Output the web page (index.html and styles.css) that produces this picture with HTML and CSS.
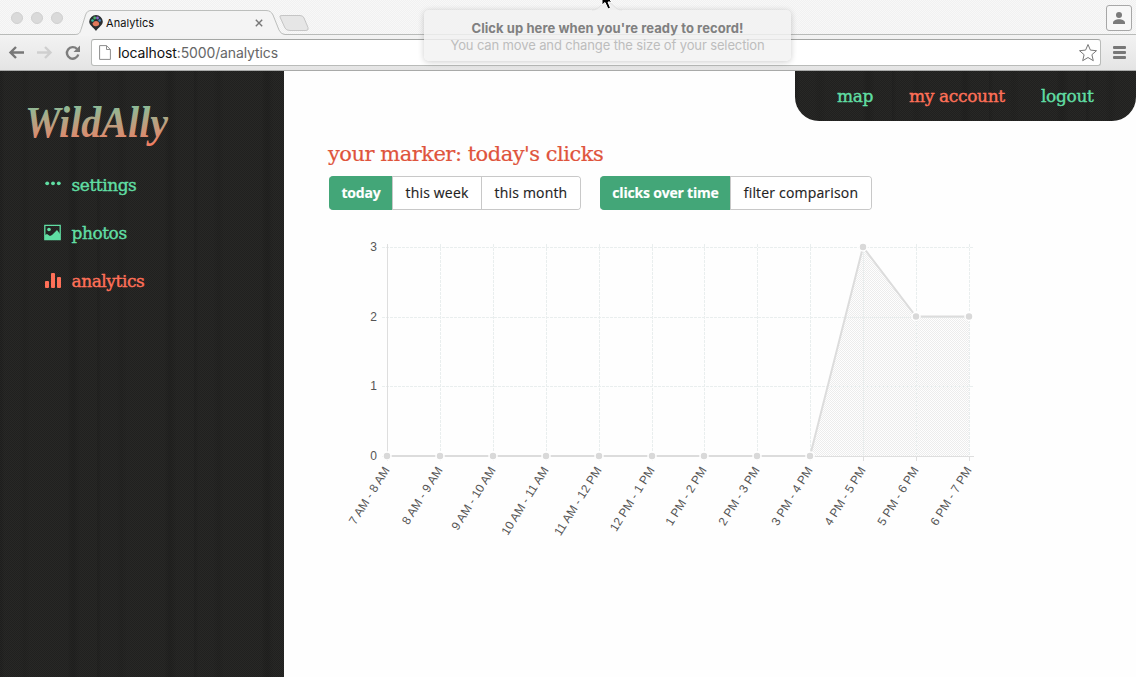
FILE: index.html
```html
<!DOCTYPE html>
<html lang="en">
<head>
<meta charset="utf-8">
<title>Analytics</title>
<link rel="stylesheet" href="styles.css">
</head>
<body>
<div class="window">
  <header class="browser">
    <div class="tabstrip">
      <div class="lights"><i></i><i></i><i></i></div>
      <div class="tab">
        <svg class="tab-shape" width="236" height="26" viewBox="0 0 236 26"><path d="M0 24.500C5 24.500 5 22 6.500 18L10.500 5Q12 .5 16 .5H191Q196 .5 198 5L204 20Q206 24.500 210 24.500V26H0Z" fill="#f4f4f4"/><path d="M0 24.500C5 24.500 5 22 6.500 18L10.500 5Q12 .5 16 .5H191Q196 .5 198 5L204 20Q206 24.500 210 24.500" fill="none" stroke="#bcbebc"/><path d="M205 7Q204 5.500 207 5.500H225Q228 5.500 229 8L233 17.500Q234 20.500 231 20.500H215Q211 20.500 210 18Z" fill="#e6e6e6" stroke="#c5c5c5"/></svg>
        <div class="tab-content">
          <svg width="14" height="16" viewBox="0 0 14 16"><path d="M7 0a6.800 6.800 0 0 1 6.800 6.500C13.800 10 10 12 7 16 4 12 .2 10 .2 6.500A6.800 6.800 0 0 1 7 0Z" fill="#2a2e30"/><circle cx="3.500" cy="5.500" r="1.300" fill="#37c3a2"/><circle cx="5.700" cy="3" r="1.400" fill="#49b56a"/><circle cx="8.500" cy="3" r="1.400" fill="#8c6bd0"/><circle cx="10.700" cy="5.500" r="1.300" fill="#4689c9"/><path d="M3.500 8.500Q6 4.500 9.500 7Q11.500 10 8 11Q4 12 3.500 8.500Z" fill="#e2795b"/></svg>
          <span>Analytics</span>
          <svg class="close" width="8" height="8" viewBox="0 0 8 8"><path d="M.8.800l6.400 6.400M7.200.800L.8 7.200" stroke="#777" stroke-width="1.400"/></svg>
        </div>
      </div>
      <div class="profile"><svg width="14" height="14" viewBox="0 0 14 14" fill="#7b7b7b"><circle cx="7" cy="4" r="3"/><path d="M1 13v-1c0-5 12-5 12 0v1Z"/></svg></div>
    </div>
    <div class="toolbar">
      <svg class="nav" width="82" height="18" viewBox="0 0 82 18" fill="none" stroke-width="2.400"><path d="M18 8.500H4.500M10 3L4.500 8.500l5.500 5.500" stroke="#777"/><path d="M31 8.500h13.500M39 3L44.500 8.500l-5.500 5.500" stroke="#cfcfcf"/><path d="M71 5A5.800 5.800 0 1 0 72.300 10.500" stroke="#7d7d7d"/><path d="M74 1.500v6.500h-6.500Z" fill="#7d7d7d"/></svg>
      <div class="address">
        <svg width="12" height="15" viewBox="0 0 12 15"><path d="M.6.600H7.500L11.400 4.500V14.400H.6ZM7.500.600V4.500H11.400" fill="#fff" stroke="#8d8d8d"/></svg>
        <span class="url">localhost<em>:5000/analytics</em></span>
        <svg class="star" width="20" height="20" viewBox="0 0 20 20"><path d="M10 1.500l2.400 5.600 6.100.6-4.600 4 1.400 6L10 14.500l-5.300 3.200 1.400-6-4.600-4 6.100-.6Z" fill="#fff" stroke="#777" stroke-linejoin="round"/></svg>
      </div>
      <div class="menu"><i></i><i></i><i></i></div>
    </div>
  </header>
  <div class="tip">
    <svg class="tip-arrow" width="30" height="12" viewBox="0 0 30 12"><path d="M0 11C8 11 9 3 15 3S22 11 30 11" fill="#efefef" stroke="#e0e0e0"/></svg>
    <b>Click up here when you're ready to record!</b>
    <span>You can move and change the size of your selection</span>
  </div>
  <svg class="cursor" width="12" height="10" viewBox="0 0 12 10"><path d="M1-6V5L4 2.500 7 9 9.500 8 7 2H11L3-6Z" fill="#000" stroke="#fff"/></svg>
  <div class="app">
    <aside class="sidebar wood">
      <svg class="logo" width="150" height="60" viewBox="0 0 150 60" role="img"><defs><linearGradient id="ink" gradientUnits="userSpaceOnUse" x1="0" y1="6" x2="0" y2="56"><stop stop-color="#7dc5a0"/><stop offset="1" stop-color="#ff765c"/></linearGradient></defs><text x="3" y="43" textLength="143" lengthAdjust="spacingAndGlyphs">WildAlly</text></svg>
      <nav class="side-nav">
        <a><svg width="18" height="18" viewBox="0 0 18 18" fill="#60dea3"><circle cx="3.200" cy="7.300" r="1.900"/><circle cx="9" cy="7.300" r="1.900"/><circle cx="14.800" cy="7.300" r="1.900"/></svg>settings</a>
        <a><svg width="18" height="18" viewBox="0 0 18 18"><path d="M.8 1.300H16.200V15.500H.8Z" fill="none" stroke="#60dea3" stroke-width="1.300"/><circle cx="5" cy="5.500" r="1.800" fill="#60dea3"/><path d="M1 15V11l2-1 3 2 2-1 5-5 3 4v5Z" fill="#60dea3"/></svg>photos</a>
        <a class="active"><svg width="18" height="18" viewBox="0 0 18 18" fill="#ff7058"><rect x="1" y="9" width="4" height="7" rx="1"/><rect x="7" y="1" width="4" height="15" rx="1"/><rect x="13" y="5" width="4" height="11" rx="1"/></svg>analytics</a>
      </nav>
    </aside>
    <main class="content">
      <nav class="top-nav wood"><a class="map">map</a><a class="account">my account</a><a class="logout">logout</a></nav>
      <h1>your marker: today's clicks</h1>
      <div class="controls">
        <div class="group"><button class="on today">today</button><button class="week">this week</button><button class="month">this month</button></div>
        <div class="group"><button class="on over">clicks over time</button><button class="filter">filter comparison</button></div>
      </div>
      <svg class="chart" width="660" height="320" viewBox="340 230 660 320">
        <defs><pattern id="dither" width="2" height="2" patternUnits="userSpaceOnUse"><path d="M0 0h1v1H0ZM1 1h1v1H1Z" fill="#ececec"/></pattern></defs>
        <path class="area" d="M387 456H810L863 247 916 317H969V456Z" fill="url(#dither)"/>
        <path class="grid" d="M382 247.500H974M382 317.500H974M382 386.500H974M440.500 244V461M493.500 244V461M546.500 244V461M599.500 244V461M652.500 244V461M704.500 244V461M757.500 244V461M810.500 244V461M863.500 244V461M916.500 244V461M969.500 244V461"/>
        <path class="axis" d="M387.500 244V461M382 456.500H974M863.500 456V461M916.500 456V461M969.500 456V461"/>
        <path class="series" d="M387 456H810L863 247 916 316.500H969"/>
        <g class="dots"><circle cx="387" cy="456" r="4"/><circle cx="440" cy="456" r="4"/><circle cx="493" cy="456" r="4"/><circle cx="546" cy="456" r="4"/><circle cx="599" cy="456" r="4"/><circle cx="652" cy="456" r="4"/><circle cx="704" cy="456" r="4"/><circle cx="757" cy="456" r="4"/><circle cx="810" cy="456" r="4"/><circle cx="863" cy="247" r="4"/><circle cx="916" cy="316.500" r="4"/><circle cx="969" cy="316.500" r="4"/></g>
        <g class="labels"><text x="377" y="251">3</text><text x="377" y="321">2</text><text x="377" y="390">1</text><text x="377" y="460">0</text>
        <text transform="translate(390 470) rotate(-58)">7 AM - 8 AM</text><text transform="translate(443 470) rotate(-58)">8 AM - 9 AM</text><text transform="translate(496 470) rotate(-58)">9 AM - 10 AM</text><text transform="translate(549 470) rotate(-58)">10 AM - 11 AM</text><text transform="translate(602 470) rotate(-58)">11 AM - 12 PM</text><text transform="translate(655 470) rotate(-58)">12 PM - 1 PM</text><text transform="translate(707 470) rotate(-58)">1 PM - 2 PM</text><text transform="translate(760 470) rotate(-58)">2 PM - 3 PM</text><text transform="translate(813 470) rotate(-58)">3 PM - 4 PM</text><text transform="translate(866 470) rotate(-58)">4 PM - 5 PM</text><text transform="translate(919 470) rotate(-58)">5 PM - 6 PM</text><text transform="translate(972 470) rotate(-58)">6 PM - 7 PM</text></g>
      </svg>
    </main>
  </div>
</div>
</body>
</html>
```

FILE: styles.css
```css
* { box-sizing: border-box; }
body { margin: 0; background: #fefefe; overflow: hidden; }
svg { display: block; flex: none; }
.window { position: relative; width: 1136px; height: 677px; display: flex; flex-direction: column; }
.browser { height: 71px; font-family: Inter, sans-serif; }
.tabstrip { height: 35px; display: flex; background: repeating-conic-gradient(#f1f1f1 0 25%, #f8f8f8 0 50%) 0 0/2px 2px; border-bottom: 1px solid #b9bbb9; }
.lights { display: flex; gap: 8px; padding: 12px 0 0 11px; width: 75px; }
.lights i { width: 12px; height: 12px; border-radius: 50%; background: #dadada; border: 1px solid #d0d0d0; }
.tab { position: relative; width: 236px; height: 26px; margin-top: 10px; }
.tab-shape { position: absolute; }
.tab-content { position: relative; display: flex; align-items: center; height: 26px; padding-left: 14px; gap: 3px; font-size: 11px; letter-spacing: .05px; color: #111; }
.close { margin-left: 98px; }
.profile { margin: 5px 4px 0 auto; width: 26px; height: 26px; border: 1px solid #a7a7a7; border-radius: 3px; display: flex; align-items: center; justify-content: center; background: #f7f7f7; }
.toolbar { height: 36px; display: flex; align-items: center; padding-left: 6px; background: linear-gradient(#f3f3f3, #e4e4e4); border-bottom: 1px solid #a9aaa9; }
.address { width: 1010px; height: 27px; margin-left: 3px; border: 1px solid #b9bbb9; border-top-color: #a4a6a4; border-radius: 3px; background: #fff; display: flex; align-items: center; padding: 0 2px 0 7px; }
.url { margin-left: 7px; font-size: 14px; letter-spacing: -.12px; color: #111; }
.url em { font-style: normal; color: #666; }
.star { margin-left: auto; }
.menu { display: flex; flex-direction: column; gap: 2px; margin-left: 12px; }
.menu i { width: 13px; height: 3px; border-radius: 1px; background: #777; }
.tip { position: absolute; left: 424px; top: 10px; width: 367px; height: 51px; border-radius: 5px; background: rgba(242,242,242,.82); box-shadow: 0 1px 6px rgba(0,0,0,.2); display: flex; flex-direction: column; align-items: center; padding-top: 10px; font: 13px/17px Inter, sans-serif; letter-spacing: -.13px; color: #bdbdbd; white-space: nowrap; }
.tip b { color: #808080; letter-spacing: .07px; }
.tip-arrow { position: absolute; left: 168px; top: -11px; }
.cursor { position: absolute; left: 601px; top: 0; }
.app { flex: 1; display: flex; min-height: 0; }
.wood { background: repeating-linear-gradient(90deg, rgba(0,0,0,.09) 0 1px, transparent 5px 19px, rgba(0,0,0,.06) 24px 25px, transparent 31px 67px, rgba(0,0,0,.1) 72px 74px, transparent 80px 97px), repeating-conic-gradient(#20201f 0 25%, #282826 0 50%) 0 0/2px 2px; }
.sidebar { width: 284px; padding: 23px 0 0 22px; }
.logo text { font: italic bold 44px "Liberation Serif", serif; fill: url(#ink); }
.side-nav { display: flex; flex-direction: column; gap: 24px; margin: 19px 0 0 22px; font: 17px/24px "DejaVu Serif", serif; }
.side-nav a { display: flex; align-items: center; gap: 9.500px; color: #60dea3; letter-spacing: -.45px; -webkit-text-stroke: .4px; }
.side-nav .active { color: #ff7058; }
.content { flex: 1; display: flex; flex-direction: column; background: #fefefe; }
.top-nav { align-self: flex-end; width: 341px; height: 50px; border-radius: 0 0 24px 24px; display: flex; padding-left: 42px; font: 17px/51px "DejaVu Serif", serif; color: #60dea3; letter-spacing: -.35px; -webkit-text-stroke: .4px; white-space: nowrap; }
.map { width: 72px; }
.account { width: 132px; color: #ff7058; }
h1 { margin: 19px 0 0 44px; font: 21px/28px "DejaVu Serif", serif; color: #df543c; letter-spacing: -.5px; -webkit-text-stroke: .2px; }
.controls { display: flex; gap: 19px; margin: 8px 0 0 45px; }
.group { display: flex; height: 34px; border: 1px solid #c8c8c8; border-radius: 4px; overflow: hidden; }
button { border: 0; border-left: 1px solid #c8c8c8; padding: 0 0 2px; background: #fff; font: 14px "Open Sans", sans-serif; letter-spacing: .18px; color: #222; -webkit-text-stroke: .15px; white-space: nowrap; }
button.on { background: #43a678; color: #fff; font-weight: 700; letter-spacing: -.2px; border: 0; }
.group:has(.on) { background: linear-gradient(90deg, #43a678 50%, #fff 0); border-left-color: #43a678; }
.today { width: 62px; }
.week { width: 89px; }
.month { width: 99px; }
.over { width: 129px; }
.filter { width: 141px; }
.group:has(.on) .on { box-shadow: 0 -1px #43a678, 0 1px #43a678; }
.group { overflow: visible; }
.on { border-radius: 3px 0 0 3px; }
.group button:last-child { border-radius: 0 3px 3px 0; }
.chart { margin: 20px 0 0 56px; }
.grid { stroke: #e9eeee; stroke-dasharray: 3 1; }
.axis { stroke: #dedede; }
.series { fill: none; stroke: #dcdcdc; stroke-width: 2; }
.dots { fill: #d9d9d9; stroke: #fff; stroke-width: 1.500; }
.labels { font: 12px "Liberation Sans", sans-serif; fill: #555; text-anchor: end; }
```
